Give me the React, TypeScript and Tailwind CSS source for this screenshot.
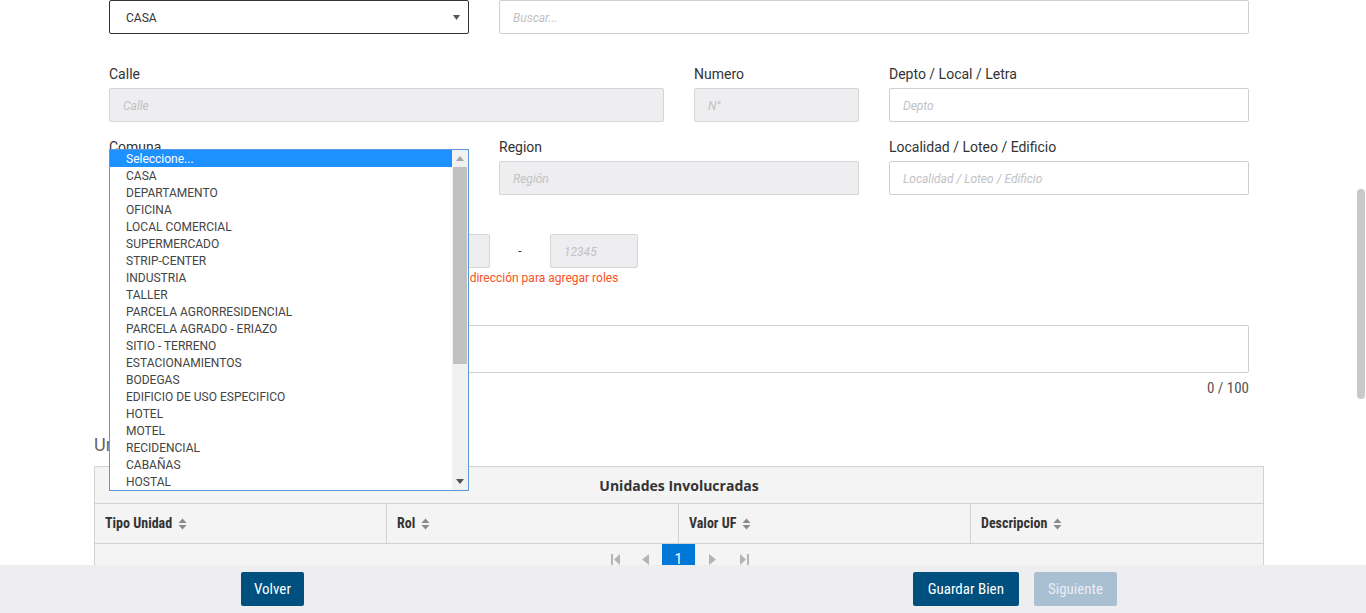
import React from "react";

const items = [
  "CASA",
  "DEPARTAMENTO",
  "OFICINA",
  "LOCAL COMERCIAL",
  "SUPERMERCADO",
  "STRIP-CENTER",
  "INDUSTRIA",
  "TALLER",
  "PARCELA AGRORRESIDENCIAL",
  "PARCELA AGRADO - ERIAZO",
  "SITIO - TERRENO",
  "ESTACIONAMIENTOS",
  "BODEGAS",
  "EDIFICIO DE USO ESPECIFICO",
  "HOTEL",
  "MOTEL",
  "RECIDENCIAL",
  "CABAÑAS",
  "HOSTAL",
];

function SortIcon() {
  return (
    <svg width="9" height="12" viewBox="0 0 9 12" className="ml-[6px]">
      <path d="M0.5 5 L4.5 0.5 L8.5 5 Z" fill="#8a8a8a" />
      <path d="M0.5 7 L4.5 11.5 L8.5 7 Z" fill="#8a8a8a" />
    </svg>
  );
}

function Label({ children }: { children: React.ReactNode }) {
  return <div className="h-[20px] leading-[20px] text-[14px] text-[#333] mb-[4px]">{children}</div>;
}

function Input({ placeholder, disabled }: { placeholder: string; disabled?: boolean }) {
  return (
    <div
      className={
        "h-[34px] border rounded-[2px] pl-[13px] pt-[1px] flex items-center text-[12px] italic text-[#c2c2c4] " +
        (disabled ? "bg-[#eeeef0] border-[#d6d6d8]" : "bg-white border-[#cfcfcf]")
      }
    >
      {placeholder}
    </div>
  );
}

export default function App() {
  const font = { fontFamily: "Roboto, 'Noto Sans', sans-serif" };
  const cond = { fontFamily: "'Roboto Condensed', Roboto, sans-serif" };
  return (
    <div className="relative w-[1366px] h-[613px] overflow-hidden bg-white flex flex-col" style={font}>
      {/* scrollable content */}
      <div className="h-[565px] overflow-hidden">
        <div className="w-[1170px] ml-[94px]">
          <div className="ml-[15px] w-[1140px] grid grid-cols-12 gap-x-[30px]">
            {/* row 1 */}
            <div className="col-span-4 h-[34px] border border-[#333] rounded-[2px] flex items-center justify-between pl-[16px] pr-[8px] pt-[1px] text-[12px] text-[#333]">
              <span>CASA</span>
              <svg width="7" height="5" viewBox="0 0 7 5">
                <path d="M0 0 L7 0 L3.5 5 Z" fill="#555" />
              </svg>
            </div>
            <div className="col-span-8">
              <Input placeholder="Buscar..." />
            </div>

            {/* row 2 */}
            <div className="col-span-6 mt-[30px]">
              <Label>Calle</Label>
              <Input placeholder="Calle" disabled />
            </div>
            <div className="col-span-2 mt-[30px]">
              <Label>Numero</Label>
              <Input placeholder="N°" disabled />
            </div>
            <div className="col-span-4 mt-[30px]">
              <Label>Depto / Local / Letra</Label>
              <Input placeholder="Depto" />
            </div>

            {/* row 3 */}
            <div className="col-span-4 mt-[15px]">
              <Label>Comuna</Label>
              <div className="h-[34px] border border-[#cfcfcf] rounded-[2px] bg-white pl-[16px] flex items-center text-[12px] text-[#333]">
                Seleccione...
              </div>
            </div>
            <div className="col-span-4 mt-[15px]">
              <Label>Region</Label>
              <Input placeholder="Región" disabled />
            </div>
            <div className="col-span-4 mt-[15px]">
              <Label>Localidad / Loteo / Edificio</Label>
              <Input placeholder="Localidad / Loteo / Edificio" />
            </div>

            {/* row 4 */}
            <div className="col-span-12 mt-[15px]">
              <Label>Rol</Label>
              <div className="flex items-center">
                <div className="w-[88px] ml-[145px]">
                  <Input placeholder="" disabled />
                </div>
                <div className="w-[60px] text-center text-[12px] text-[#333]">-</div>
                <div className="w-[88px]">
                  <Input placeholder="" disabled />
                </div>
                <div className="w-[60px] text-center text-[12px] text-[#333]">-</div>
                <div className="w-[88px]">
                  <Input placeholder="12345" disabled />
                </div>
              </div>
              <div className="mt-[2px] h-[16px] leading-[16px] text-[12px] text-[#f8501c] pl-[284px]">
                Debe ingresar dirección para agregar roles
              </div>
            </div>

            {/* row 5 */}
            <div className="col-span-12 mt-[15px]">
              <Label>Observación</Label>
              <div className="h-[48px] border border-[#cfcfcf] rounded-[2px] bg-white" />
              <div className="mt-[6px] h-[18px] leading-[18px] text-right text-[15px] text-[#555]" style={cond}>
                0 / 100
              </div>
            </div>
          </div>

          {/* heading */}
          <div className="mt-[36px] h-[24px] leading-[24px] text-[18px] text-[#666]">Unidades Involucradas</div>

          {/* table */}
          <div className="mt-[9px] border border-[#d2d2d2] bg-[#f4f4f4]">
            <div
              className="h-[37px] flex items-center justify-center text-[14px] font-bold text-[#333] border-b border-[#d2d2d2]"
              style={{ fontFamily: "'Open Sans', Roboto, sans-serif" }}
            >
              Unidades Involucradas
            </div>
            <div className="h-[40px] grid grid-cols-4 border-b border-[#d2d2d2] text-[14px] font-bold text-[#333]" style={cond}>
              {["Tipo Unidad", "Rol", "Valor UF", "Descripcion"].map((h, i) => (
                <div key={h} className={"flex items-center pl-[10px] " + (i < 3 ? "border-r border-[#d2d2d2]" : "")}>
                  <span>{h}</span>
                  <SortIcon />
                </div>
              ))}
            </div>
            <div className="h-[40px] flex justify-center items-start">
              <div className="flex items-center h-[30px] ml-[2px]">
                <svg width="10" height="11" viewBox="0 0 10 11" className="mr-[21px]">
                  <rect x="0" y="0" width="2" height="11" fill="#b5b5b5" />
                  <path d="M9 0 L3 5.5 L9 11 Z" fill="#b5b5b5" />
                </svg>
                <svg width="7" height="11" viewBox="0 0 7 11" className="mr-[13px]">
                  <path d="M7 0 L0 5.5 L7 11 Z" fill="#b5b5b5" />
                </svg>
                <div className="w-[33px] h-[30px] bg-[#0078d7] text-white text-[14px] flex items-center justify-center">1</div>
                <svg width="7" height="11" viewBox="0 0 7 11" className="ml-[14px]">
                  <path d="M0 0 L7 5.5 L0 11 Z" fill="#b5b5b5" />
                </svg>
                <svg width="10" height="11" viewBox="0 0 10 11" className="ml-[23px]">
                  <path d="M1 0 L7 5.5 L1 11 Z" fill="#b5b5b5" />
                  <rect x="8" y="0" width="2" height="11" fill="#b5b5b5" />
                </svg>
              </div>
            </div>
          </div>
        </div>
      </div>

      {/* footer */}
      <div className="h-[48px] bg-[#eeeef0] flex items-center" style={cond}>
        <div className="ml-[241px] w-[876px] flex justify-between">
          <div className="h-[34px] px-[13px] bg-[#00507f] text-white text-[15px] flex items-center rounded-[2px]">Volver</div>
          <div className="flex gap-[15px]">
            <div className="h-[34px] px-[15px] bg-[#00507f] text-white text-[15px] flex items-center rounded-[2px]">Guardar Bien</div>
            <div className="h-[34px] px-[14px] bg-[#a9bfd2] text-[#e8eef4] text-[15px] flex items-center rounded-[2px]">Siguiente</div>
          </div>
        </div>
      </div>

      {/* open listbox overlay */}
      <div className="absolute left-[109px] top-[149px] w-[360px] h-[342px] border border-[#5a9ad8] bg-white flex">
        <div className="flex-1">
          <div className="h-[17px] leading-[17px] pl-[16px] text-[12px] text-white bg-[#1e90ff]">
            <span className="relative top-[1px]">Seleccione...</span>
          </div>
          {items.map((it) => (
            <div key={it} className="h-[17px] leading-[17px] pl-[16px] text-[12px] text-[#444]">
              <span className="relative top-[1px]">{it}</span>
            </div>
          ))}
        </div>
        <div className="w-[16px] bg-[#f1f1f1] flex flex-col items-center">
          <div className="h-[17px] flex items-center justify-center">
            <svg width="8" height="5" viewBox="0 0 8 5">
              <path d="M0 5 L4 0 L8 5 Z" fill="#a3a3a3" />
            </svg>
          </div>
          <div className="w-[14px] h-[197px] bg-[#c1c1c1]" />
          <div className="flex-1" />
          <div className="h-[17px] flex items-center justify-center">
            <svg width="8" height="5" viewBox="0 0 8 5">
              <path d="M0 0 L8 0 L4 5 Z" fill="#505050" />
            </svg>
          </div>
        </div>
      </div>

      {/* page scrollbar thumb */}
      <div className="absolute left-[1357px] top-[189px] w-[8px] h-[210px] rounded-full bg-[#c9c9c9]" />
    </div>
  );
}
